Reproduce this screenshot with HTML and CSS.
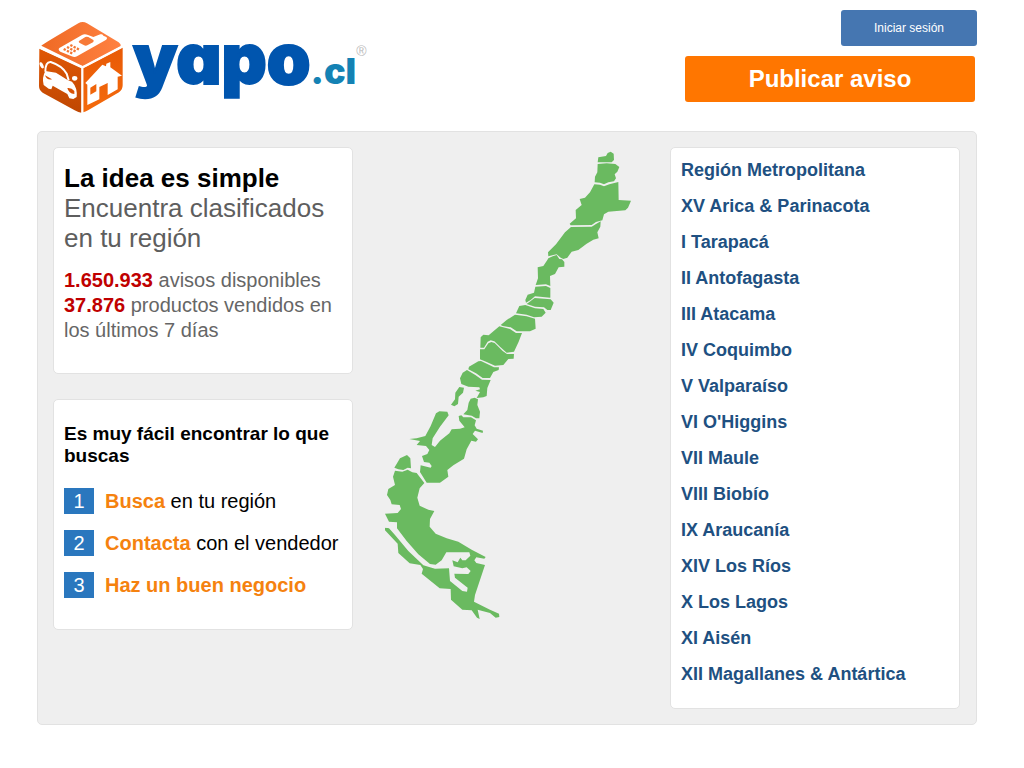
FILE: index.html
```html
<!DOCTYPE html>
<html lang="es">
<head>
<meta charset="utf-8">
<meta name="viewport" content="width=device-width, initial-scale=1">
<title>yapo.cl</title>
<link rel="stylesheet" href="styles.css">
</head>
<body>
<div class="page">
  <header class="header">
    <a class="logo" href="#" aria-label="yapo.cl">
      <svg class="logo-cube" viewBox="24 15 258 282" aria-hidden="true">
        <defs>
          <linearGradient id="top" x1="0" y1="0" x2="1" y2="0"><stop offset="0" stop-color="#ef6a24"/><stop offset="1" stop-color="#ff8142"/></linearGradient>
          <linearGradient id="side" x1="0" y1="0" x2="0" y2="1"><stop offset="0" stop-color="#e05806"/><stop offset="1" stop-color="#bf4702"/></linearGradient>
          <linearGradient id="front" x1="0" y1="0" x2="0" y2="1"><stop offset="0" stop-color="#e85a06"/><stop offset="1" stop-color="#f46a0c"/></linearGradient>
        </defs>
        <path fill="url(#top)" d="M34 92Q38 88 145 25Q158 17 171 25L266 82Q274 88 272 93L158 153Z"/>
        <path fill="url(#side)" d="M28 101L154 160V293Q146 293 134 286L38 233Q27 226 27 213Z"/>
        <path fill="url(#front)" d="M160 160L278 98V211Q278 224 267 232L174 286Q166 291 160 292Z"/>
        <path fill="none" stroke="#fff" stroke-width="5" d="M29 98L150 154Q158 158 166 153L276 95M157 157V294"/>
        <path fill="#fff" d="M88 99L156 60Q164 56 174 60L190 66L211 58Q219 56 220 62L229 66Q234 71 226 76L141 124Q134 128 125 124L91 110Q83 104 88 99Z"/>
        <path fill="#f77a38" d="M148 77L166 66Q173 64 180 69L190 75Q193 78 189 82L172 91Q167 94 161 90L148 83Q144 80 148 77Z"/>
        <path fill="none" stroke="#f47632" stroke-width="7" stroke-dasharray="7 4" d="M121 90L150 105M111 96L140 111M101 102L130 117"/>
        <path fill="none" stroke="#fff" stroke-width="6" d="M46 170Q46 140 62 141Q96 152 110 176L116 196"/>
        <path fill="#fff" d="M46 168L78 173L114 196L126 200Q143 218 140 246L130 252L118 250L112 237L68 212L64 223L56 221L41 210Q35 188 46 168Z"/>
        <path fill="#d95205" d="M45 181L66 193Q50 196 45 181ZM112 219Q124 217 133 228V237Q116 236 112 219Z"/>
        <ellipse fill="#fff" cx="35" cy="151" rx="5" ry="10" transform="rotate(-25 35 151)"/>
        <ellipse fill="#fff" cx="134" cy="190" rx="8" ry="7"/>
        <path fill="#fff" fill-rule="evenodd" d="M166 204L217 149L228 154L229 146L241 141V157L276 182L263 185V223L233 240V204L208 216V253L172 270V209ZM181 218V239L199 229V207Z"/>
      </svg>
      <span class="logo-text"><span class="logo-name">yapo</span><span class="logo-tld">.cl</span></span><span class="logo-mark">®</span>
    </a>
    <div class="actions">
      <button class="login" type="button">Iniciar sesión</button>
      <a class="publish" href="#">Publicar aviso</a>
    </div>
  </header>

  <main class="panel">
    <div class="intro">
      <section class="card idea">
        <h1 class="title">La idea es simple</h1>
        <p class="lead">Encuentra clasificados en tu región</p>
        <p class="stats"><strong>1.650.933</strong> avisos disponibles<br><strong>37.876</strong> productos vendidos en los últimos 7 días</p>
      </section>
      <section class="card how">
        <h2 class="subtitle">Es muy fácil encontrar lo que buscas</h2>
        <ol class="steps">
          <li class="step"><span class="number">1</span><span><strong>Busca</strong> en tu región</span></li>
          <li class="step"><span class="number">2</span><span><strong>Contacta</strong> con el vendedor</span></li>
          <li class="step"><span class="number">3</span><span><strong>Haz un buen negocio</strong></span></li>
        </ol>
      </section>
    </div>

    <svg class="map" viewBox="384 150 248 471" role="img" aria-label="Mapa de Chile">
      <g transform="translate(540 145) scale(.33333)">
        <path d="M175 37L198 33L203 24L212 20L221 26L222 45L215 52L173 52Z"/>
        <path d="M173 57L200 55L226 57L238 66L232 80L224 88L228 100L222 109L205 112L192 118L180 113L164 112L165 95L172 82Z"/>
        <path d="M163 118L180 119L192 124L208 118L235 111L236 165L273 167L264 188L256 196L205 200L192 208L187 226L168 231L155 240L92 241L89 236L108 220L107 195L125 180L119 162L135 158L150 142Z"/>
        <path d="M93 246L155 245L168 237L182 229L181 245L172 262L176 280L160 284L140 296L115 315L95 320L82 338L70 342L62 338L50 328L40 330L25 334L24 322L48 298L75 262Z"/>
      </g>
      <g transform="translate(460 250) scale(.33333)">
        <path d="M265 25L278 19L290 15L298 27L306 28L313 36L313 50L296 52L285 72L270 78L271 108L258 103L227 105L234 85L233 52L250 48L262 30Z"/>
        <path d="M226 110L258 108L271 114L271 143L225 139L212 150L198 158L196 150L203 134L222 128Z"/>
        <path d="M224 144L272 148L281 158L272 180L262 180L252 172L225 170L200 162Z"/>
        <path d="M178 168L196 165L225 175L250 177L257 188L245 200L222 202L200 194L168 190Z"/>
        <path d="M165 194L200 199L225 206L227 236L210 244L185 244L170 244L152 232L128 228L122 225L140 210Z"/>
        <path d="M118 229L150 237L168 249L186 249L176 275L162 305L140 308L120 290L103 274L92 271L83 275L72 293L61 293L62 262L70 254L86 256Z"/>
        <path d="M60 298L73 298L85 280L94 276L104 279L128 303L141 312L162 312L161 326L145 327L130 345L105 347L80 336L60 328Z"/>
      </g>
      <g transform="translate(400 350) scale(.33333)">
        <path d="M207 50L235 34L243 33L262 42L282 52L297 52L296 60L280 66L270 84L248 84L228 70L205 58Z"/>
        <path d="M201 60L226 75L246 89L272 90L262 114L260 138L250 142L230 144L240 126L226 122L240 118L238 112L205 110L184 102L180 85L188 68Z"/>
        <path d="M178 111L192 113L189 128L176 140L174 162L163 169L153 164L165 148L166 128Z"/>
        <path d="M212 146L224 143L234 148L232 165L240 185L238 205L228 205L215 197L190 193L202 180L206 158Z"/>
        <path d="M176 198L184 196L190 202L213 202L228 211L224 226L230 236L249 242L248 249L225 242L218 252L234 268L228 275L214 272L200 298L192 326L160 346L142 360L145 380L120 398L80 398L60 366L62 346L92 353L95 348L88 338L72 336L66 318L82 312L88 300L78 288L50 285L60 273L28 267L50 265L76 258L92 228L108 190L118 184L142 185L146 196L120 230L98 265L95 285L105 291L120 272L148 250L155 238L180 236L194 232L178 212Z"/>
      </g>
      <g transform="translate(375 445) scale(.33333)">
        <path d="M58 68L75 40L96 30L106 40L108 70L98 68L85 75L70 73Z"/>
        <path d="M60 77L82 80L98 74L112 82L125 84L148 114L134 130L127 158L134 182L160 194L178 198L165 222L164 245L182 266L215 280L250 290L290 314L332 336L328 341L304 337L298 346L304 354L330 360L300 450L297 470L345 494L372 506L373 516L362 518L345 504L308 494L314 522L306 518L290 496L262 494L228 464L227 432L194 430L140 386L144 372L136 360L104 355L70 324L68 296L30 256L30 248L66 250L66 232L42 230L30 206L68 204L78 192L74 180L50 178L46 165L36 150L40 132L60 120L54 95Z"/>
        <path class="water" d="M28 232L60 234L66 250L95 288L130 328L165 357L182 359L200 346L214 322L283 322L286 332L272 346L262 346L256 338L248 352L232 346L236 364L262 370L275 367L287 378L280 387L238 386L240 398L278 428L276 440L262 438L225 408L222 370L180 371L145 361L100 318L60 270L42 250L28 247Z"/>
      </g>
    </svg>

    <nav class="card regions" aria-label="Regiones">
      <a class="region" href="#">Región Metropolitana</a>
      <a class="region" href="#">XV Arica &amp; Parinacota</a>
      <a class="region" href="#">I Tarapacá</a>
      <a class="region" href="#">II Antofagasta</a>
      <a class="region" href="#">III Atacama</a>
      <a class="region" href="#">IV Coquimbo</a>
      <a class="region" href="#">V Valparaíso</a>
      <a class="region" href="#">VI O'Higgins</a>
      <a class="region" href="#">VII Maule</a>
      <a class="region" href="#">VIII Biobío</a>
      <a class="region" href="#">IX Araucanía</a>
      <a class="region" href="#">XIV Los Ríos</a>
      <a class="region" href="#">X Los Lagos</a>
      <a class="region" href="#">XI Aisén</a>
      <a class="region" href="#">XII Magallanes &amp; Antártica</a>
    </nav>
  </main>
</div>
</body>
</html>
```
FILE: styles.css
```css
* { box-sizing: border-box; }
body, h1, h2, p, ol { margin: 0; padding: 0; }
body {
  background: #fff;
  color: #000;
  font-family: "Liberation Sans", Arial, sans-serif;
}
a { text-decoration: none; }

.page { padding: 10px 47px 40px 37px; }

.header {
  display: flex;
  justify-content: space-between;
  align-items: flex-start;
  padding-bottom: 17px;
}
.logo {
  display: flex;
  align-items: flex-start;
  padding-top: 10px;
  line-height: 1;
  color: #0055ae;
}
.logo-cube { width: 88px; height: 94px; }
.logo-text {
  display: flex;
  align-items: baseline;
  padding: 4px 0 0 8px;
  font-family: Inter, "Liberation Sans", sans-serif;
  font-weight: 900;
  -webkit-text-stroke: 2px currentColor;
}
.logo-name { font-size: 70px; font-feature-settings: "cv11"; }
.logo-tld { font-size: 36px; color: #1482b4; -webkit-text-stroke-width: 0; }
.logo-mark { padding-top: 24px; font-size: 14px; color: #bbb; }

.actions { display: flex; flex-direction: column; align-items: flex-end; gap: 10px; }
.login {
  width: 136px;
  height: 36px;
  border: 0;
  border-radius: 3px;
  background: #4576b1;
  color: #fff;
  font: 12px "Liberation Sans", Arial, sans-serif;
}
.publish {
  width: 290px;
  margin-right: 2px;
  border-radius: 3px;
  background: #ff7600;
  color: #fff;
  font-size: 24px;
  font-weight: bold;
  line-height: 46px;
  text-align: center;
}

.panel {
  display: grid;
  grid-template-columns: 300px 1fr 290px;
  align-items: start;
  padding: 15px 16px 15px 15px;
  border: 1px solid #e2e2e2;
  border-radius: 5px;
  background: #efefef;
}
.card {
  padding: 10px;
  border: 1px solid #e2e2e2;
  border-radius: 5px;
  background: #fff;
}
.intro { display: grid; gap: 25px; }

.idea { padding: 15px 10px 30px; }
.title { font-size: 26px; line-height: 30px; }
.lead { font-size: 26px; line-height: 30px; color: #5e5e5e; }
.stats { margin-top: 15px; font-size: 20px; line-height: 25px; color: #666; }
.stats strong { color: #c00000; }

.how { padding: 23px 10px 31px; }
.subtitle { font-size: 19px; line-height: 22px; }
.steps { display: grid; gap: 16px; margin-top: 21px; list-style: none; }
.step { display: flex; gap: 11px; font-size: 20px; line-height: 26px; white-space: nowrap; }
.step strong { color: #f5820f; }
.number { width: 30px; background: #2a77be; color: #fff; text-align: center; }

.map { width: 248px; height: 471px; margin: 3px 0 0 31px; fill: #6aba60; }
.water { fill: #efefef; }

.regions { display: grid; padding: 4px 10px 16px; }
.region { color: #205081; font-size: 18px; font-weight: bold; line-height: 36px; }
```
